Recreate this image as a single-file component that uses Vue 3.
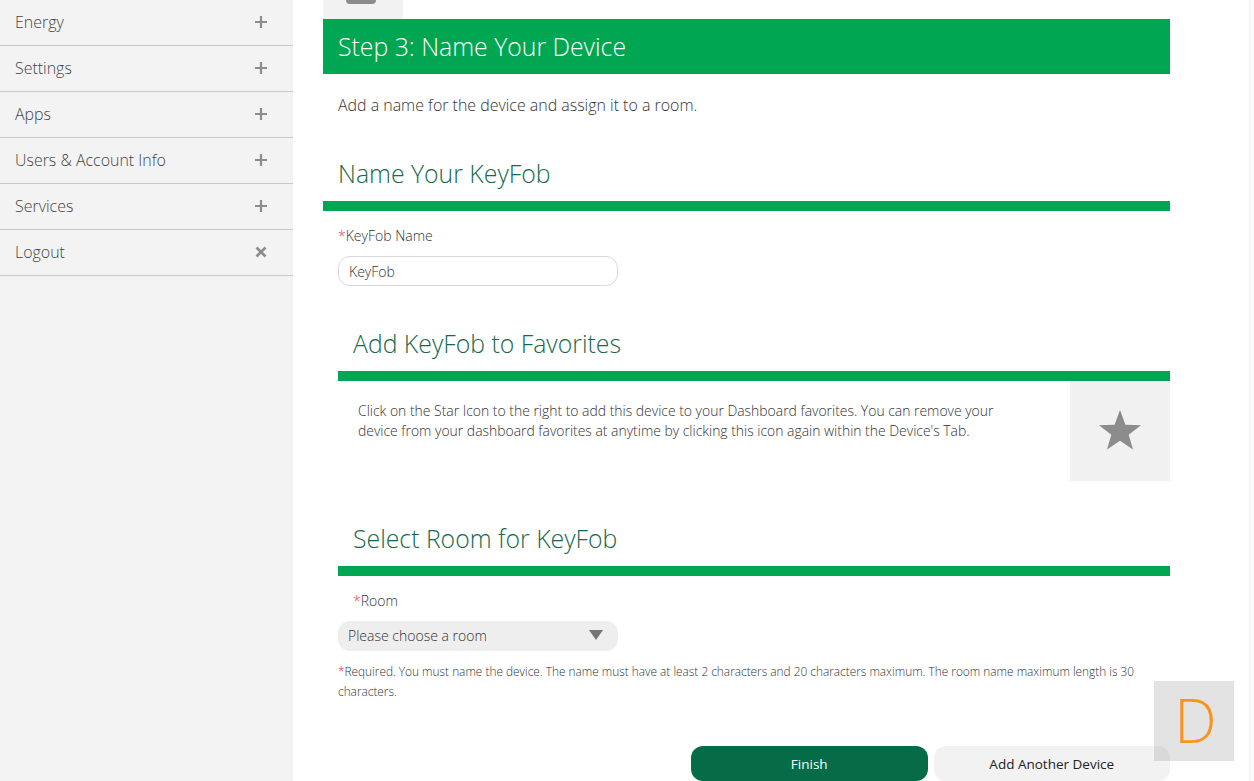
<template>
  <div class="page">
    <aside class="sidebar">
      <div v-for="item in menu" :key="item.label" class="menu-item">
        <span>{{ item.label }}</span>
        <svg class="menu-icon" width="14" height="14" viewBox="0 0 14 14">
          <path v-if="item.close" d="M2.5 2.500l9 9M11.500 2.500l-9 9" stroke="#8c8c8c" stroke-width="2.600" fill="none" />
          <path v-else d="M7 1v12M1 7h12" stroke="#8c8c8c" stroke-width="2.200" fill="none" />
        </svg>
      </div>
    </aside>

    <main class="main">
      <div class="prev-tile"><div class="prev-shape"></div></div>
      <h1 class="step-title">Step 3: Name Your Device</h1>
      <p class="intro">Add a name for the device and assign it to a room.</p>

      <h2 class="section-title name-title">Name Your KeyFob</h2>
      <div class="green-rule"></div>
      <label class="field-label name-label"><span class="req">*</span>KeyFob Name</label>
      <input class="text-input" type="text" value="KeyFob" />

      <div class="sub-section fav-section">
        <h2 class="section-title">Add KeyFob to Favorites</h2>
        <div class="green-rule"></div>
        <div class="fav-row">
          <p class="fav-text">Click on the Star Icon to the right to add this device to your Dashboard favorites. You can remove your device from your dashboard favorites at anytime by clicking this icon again within the Device's Tab.</p>
          <div class="star-tile">
            <svg class="star" width="42" height="40" viewBox="0 0 42 40">
              <path d="M21 0l5.400 14.800 15.600.4-12.300 9.600L34 39.500 21 30.700 8 39.500l4.300-14.700L0 15.200l15.600-.4z" fill="#8c8c8c" />
            </svg>
          </div>
        </div>
      </div>

      <div class="sub-section room-section">
        <h2 class="section-title">Select Room for KeyFob</h2>
        <div class="green-rule"></div>
        <label class="field-label room-label"><span class="req">*</span>Room</label>
        <div class="select-box">
          <span>Please choose a room</span>
          <svg width="14" height="10" viewBox="0 0 14 10"><path d="M0 0h14L7 10z" fill="#757575" /></svg>
        </div>
      </div>

      <p class="note"><span class="req">*</span>Required. You must name the device. The name must have at least 2 characters and 20 characters maximum. The room name maximum length is 30 characters.</p>

      <div class="actions">
        <button class="btn btn-finish">Finish</button>
        <button class="btn btn-add">Add Another Device</button>
      </div>
    </main>

    <div class="scroll-track"></div>
    <div class="float-badge">D</div>
  </div>
</template>

<script setup>
const menu = [
  { label: 'Energy' },
  { label: 'Settings' },
  { label: 'Apps' },
  { label: 'Users & Account Info' },
  { label: 'Services' },
  { label: 'Logout', close: true },
]
</script>

<style>
html, body { margin: 0; overflow: hidden; background: #fff; }
</style>

<style scoped>
.page { display: flex; height: 781px; overflow: hidden; position: relative; font-family: "Open Sans", "Liberation Sans", sans-serif; font-weight: 300; color: #333; }
.sidebar { width: 293px; flex: none; background: #f3f3f3; }
.menu-item { height: 43px; border-bottom: 1px solid #c9c9c9; display: flex; align-items: center; justify-content: space-between; padding: 0 25px 2px 15px; font-size: 15.950px; color: #444; }
.menu-icon { display: block; }
.main { width: 847px; margin-left: 30px; flex: none; }
.prev-tile { width: 80px; height: 19px; background: #f2f2f2; overflow: hidden; }
.prev-shape { width: 30px; height: 4px; margin-left: 23px; background: #8c8c8c; border-radius: 0 0 6px 6px; }
.step-title { margin: 0; height: 55px; line-height: 55px; background: #00a651; color: #fff; font-size: 24.800px; font-weight: 300; padding-left: 15px; }
.intro { margin: 0; padding: 21px 0 0 15px; font-size: 15.950px; line-height: 20px; }
.section-title { margin: 0; padding-left: 15px; font-size: 24.800px; font-weight: 300; line-height: 34px; padding-bottom: 2px; color: #17694a; }
.name-title { margin-top: 41px; }
.green-rule { height: 10px; background: #00a651; margin-top: 9px; }
.field-label { display: block; font-size: 14px; line-height: 20px; }
.name-label { margin: 15px 0 0 15px; }
.req { color: #e0364c; }
.text-input { display: block; box-sizing: border-box; width: 280px; height: 30px; margin: 10px 0 0 15px; padding: 0 10px; border: 1px solid #d9d9d9; border-radius: 12px; font: 300 14px "Open Sans", sans-serif; color: #333; background: #fff; outline: none; }
.sub-section { margin-left: 15px; }
.fav-section { margin-top: 40px; }
.fav-row { display: flex; justify-content: space-between; height: 100px; }
.fav-text { margin: 20px 0 0 20px; width: 660px; font-size: 13.930px; line-height: 20px; }
.star-tile { width: 100px; height: 100px; background: #f1f1f1; display: flex; align-items: center; justify-content: center; }
.star { margin-top: -2px; }
.room-section { margin-top: 40px; }
.room-label { margin: 15px 0 0 15px; }
.select-box { box-sizing: border-box; width: 280px; height: 30px; margin: 10px 0 0 0; padding: 0 15px 2px 10px; display: flex; align-items: center; justify-content: space-between; background: #eee; border-radius: 12px; font-size: 14px; }
.note { margin: 10px 0 0 15px; font-size: 11.850px; line-height: 20px; }
.actions { display: flex; margin: 45px 0 0 368px; gap: 6px; }
.btn { width: 237px; height: 35px; border: none; border-radius: 12px; font: 400 13.500px "Open Sans", sans-serif; padding: 0; }
.btn-finish { background: #066b47; color: #fff; }
.btn-add { background: #f2f2f2; color: #222; }
.scroll-track { width: 4px; margin-left: auto; flex: none; background: #fbfbfb; border-left: 1px solid #f1f1f1; }
.float-badge { position: absolute; left: 1154px; top: 681px; box-sizing: border-box; width: 80px; height: 80px; padding-left: 3px; background: rgba(128, 128, 128, 0.22); color: #f7941d; font-size: 60px; line-height: 78px; text-align: center; }
</style>
